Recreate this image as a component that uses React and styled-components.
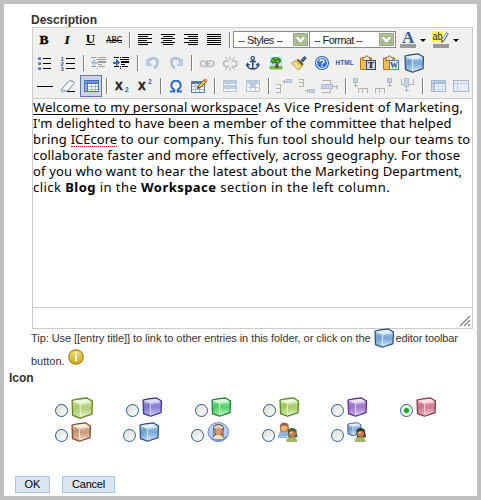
import React from "react";
import styled, { createGlobalStyle } from "styled-components";

const Global = createGlobalStyle`
  * { box-sizing: border-box; }
  html, body { margin: 0; padding: 0; background: #fff; }
`;

const sans = `"Liberation Sans", Arial, sans-serif`;

const Page = styled.main`
  width: 481px;
  height: 500px;
  border: 4px solid #c0c0c0;
  background: #fff;
  overflow: hidden;
  font-family: ${sans};
  font-size: 11px;
  color: #333;
`;

const Label = styled.h2`
  margin: 0;
  padding-left: ${(p) => p.$indent}px;
  font-size: 12px;
  font-weight: bold;
  line-height: 14px;
  height: ${(p) => p.$height}px;
  letter-spacing: ${(p) => p.$spacing || 0}px;
  color: #333;
`;

const DescriptionSection = styled.section`
  padding-top: 9px;
`;

const Editor = styled.div`
  width: 441px;
  height: 302px;
  margin-left: 28px;
  border: 1px solid #ccc;
  display: flex;
  flex-direction: column;
`;

const Toolbar = styled.div`
  height: 71px;
  padding: 1px 0 0 1px;
  background: #f0f0ee;
  border-bottom: 1px solid #ccc;
`;

const ToolRow = styled.div`
  display: flex;
  height: 23px;
`;

const ToolButton = styled.button`
  flex: none;
  width: 22px;
  height: 22px;
  margin: 0 1px 0 0;
  padding: 0;
  border: 1px solid ${(p) => (p.$active ? "#6676a8" : "transparent")};
  background: ${(p) => (p.$active ? "#d0d2dc" : "transparent")};
  svg { display: block; overflow: visible; }
`;

const Separator = styled.div`
  flex: none;
  width: 2px;
  height: 16px;
  margin: 3px 3px 0;
  border-left: 1px solid #808080;
  border-right: 1px solid #fff;
`;

const Select = styled.div`
  width: ${(p) => p.$width}px;
  height: 17px;
  margin: 2px ${(p) => p.$after || 0}px 0 -1px;
  padding: 1px 1px 1px 4px;
  display: flex;
  justify-content: space-between;
  align-items: center;
  flex: none;
  background: #fff;
  border: 1px solid #8c8c8c;
  color: #222;
  font-size: 11px;
  letter-spacing: ${(p) => p.$spacing}px;
  white-space: nowrap;
`;

const ColorButton = styled.div`
  flex: none;
  width: 33px;
  height: 22px;
  svg { display: block; overflow: visible; }
`;

const Content = styled.div`
  flex: 1;
  font-family: "Noto Sans", "Open Sans", sans-serif;
  font-size: 13px;
  line-height: 16px;
  color: #000;
`;

const Line = styled.div`
  height: 16px;
  white-space: nowrap;
  letter-spacing: ${(p) => p.$spacing}px;
`;

const Underlined = styled.span`
  display: inline-block;
  height: 16px;
  border-bottom: 1px solid #000;
  letter-spacing: 0.16px;
`;

const Misspelled = styled.span`
  display: inline-block;
  height: 16px;
  border-bottom: 1px dotted #e00;
  letter-spacing: 0;
`;

const StatusBar = styled.div`
  height: 21px;
  border-top: 1px solid #ccc;
  display: flex;
  justify-content: flex-end;
  align-items: flex-end;
  padding: 0 1px 1px 0;
  svg { display: block; }
`;

const Tip = styled.div`
  padding-left: 27px;
  display: flex;
  align-items: flex-start;
  height: ${(p) => p.$height}px;
  line-height: 13px;
  white-space: nowrap;
  svg { flex: none; display: block; margin: ${(p) => p.$icon}; }
`;

const TipText = styled.span`
  padding-top: ${(p) => p.$top}px;
  letter-spacing: ${(p) => p.$spacing || 0}px;
`;

const IconGrid = styled.div`
  display: grid;
  grid-template-columns: 71px 69px 68px 68px 69px 60px;
  grid-auto-rows: 25px;
  padding: 9px 0 0 51px;
  height: 88px;
`;

const IconOption = styled.label`
  display: flex;
  align-items: flex-start;
  margin-left: ${(p) => p.$shift || 0}px;
  svg { display: block; flex: none; overflow: visible; }
`;

const Radio = styled.span`
  flex: none;
  width: 13px;
  height: 13px;
  margin: 7px 3px 0 0;
  border: 1px solid #245a8e;
  border-radius: 50%;
  background: ${(p) =>
    p.$checked
      ? "radial-gradient(circle, #20a820 0 2px, #8fd68f 2.7px, #f8f8f5 3.3px)"
      : "linear-gradient(135deg, #dcdcd7, #fff)"};
`;

const Actions = styled.div`
  display: flex;
  gap: 12px;
  padding-left: 11px;
`;

const FormButton = styled.button`
  width: ${(p) => p.$width}px;
  height: 17px;
  padding: 0;
  border: 1px solid #a6c4e4;
  background: #dce6f2;
  color: #000;
  font: 11px/15px ${sans};
  letter-spacing: ${(p) => p.$spacing}px;
`;

const Svg = ({ w = 20, h = 20, children, ...rest }) => (
  <svg width={w} height={h} viewBox={`0 0 ${w} ${h}`} fill="none" {...rest}>
    {children}
  </svg>
);
const Px = (props) => <Svg shapeRendering="crispEdges" {...props} />;
const Bars = ({ rows, fill = "#000" }) => rows.map(([x, y, w, h = 1], i) => (
  <rect key={i} x={x} y={y} width={w} height={h} fill={fill} />
));

const serif = { fontFamily: "Liberation Serif, serif", fontWeight: "bold", fill: "#000" };
const small = { fontFamily: "Liberation Sans, sans-serif", fontWeight: "bold" };

const Bold = () => <Svg><text x="4.6" y="14" fontSize="13.5" stroke="#000" strokeWidth=".4" {...serif}>B</text></Svg>;
const Italic = () => <Svg><text x="6.5" y="14" fontSize="13.5" fontStyle="italic" stroke="#000" strokeWidth=".2" {...serif}>I</text></Svg>;
const Underline = () => <Svg><text x="4.8" y="12.5" fontSize="13" {...serif}>U</text><path d="M5 14.5h9" stroke="#000" /></Svg>;
const Strike = () => <Svg><text x="2" y="13" fontSize="10" textLength="16" lengthAdjust="spacingAndGlyphs" stroke="#000" strokeWidth=".2" {...serif} fontWeight="normal">ABC</text><path d="M2 10.5h16" stroke="#000" /></Svg>;

const Align = ({ kind }) => {
  const widths = [14, 10, 14, 9, 14, 10];
  return (
    <Px>
      <Bars rows={widths.map((n, i) => {
        const w = kind === "full" ? 14 : n;
        const x = kind === "right" ? 17 - w : kind === "center" ? 3 + Math.floor((14 - w) / 2) : 3;
        return [x, 4 + i * 2, w];
      })} />
    </Px>
  );
};

const Bullets = () => (
  <Svg>
    {[5.5, 10.5, 15.5].map((y) => <g key={y}><circle cx="4.5" cy={y} r="1.6" fill="#315fb5" /><circle cx="4.2" cy={y - 0.3} r=".6" fill="#bcd0f3" /><path d={`M8 ${y}h8`} stroke="#000" /></g>)}
  </Svg>
);
const Numbers = () => (
  <Svg>
    {[5.5, 10.5, 15.5].map((y, i) => <g key={y}><text x="2.5" y={y + 2} fontSize="6" fill="#2a58b8" {...small}>{i + 1}</text><path d={`M8 ${y}h9`} stroke="#000" /></g>)}
  </Svg>
);
const Dent = ({ out }) => (
  <Px opacity={out ? 0.35 : 1}>
    <Bars rows={[[2, 4, 5], [8, 4, 1], [10, 4, 7], [8, 6, 9], [9, 8, 8, 2], [9, 11, 4], [2, 13, 5], [8, 13, 1], [10, 13, 6], [8, 15, 1]]} />
    <path d={out ? "M2 9.5l4-3.5v2.5h3v2H6v2.5z" : "M8 9.5L4 6v2.5H1v2h3v2.5z"} fill="#3168c4" />
  </Px>
);
const Undo = ({ flip }) => (
  <Svg opacity=".4" transform={flip ? "scale(-1 1)" : undefined}>
    <path d="M5 8.5C9 3 15 5 14.5 9.5C14.3 12 13 14 11 15" stroke="#4f7fc4" strokeWidth="2.6" />
    <path d="M3 5v8h7z" fill="#6b9add" />
  </Svg>
);
const Link = ({ broken }) => (
  <Svg opacity=".4">
    <rect x="3.5" y="8" width="7" height="5.5" rx="2.7" stroke="#627080" strokeWidth="1.5" />
    <rect x="9.5" y="8" width="7.5" height="5.5" rx="2.7" stroke="#627080" strokeWidth="1.5" />
    {broken ? <><path d="M10 7v7" stroke="#f0f0ee" strokeWidth="3" /><path d="M10 3v4M5 4l3 3M15 4l-3 3M10 14v4M5 17l3-3M15 17l-3-3" stroke="#555" /></> : <path d="M7.5 10.7h6" stroke="#627080" strokeWidth="1.5" />}
  </Svg>
);
const Anchor = () => (
  <Svg><circle cx="9.8" cy="5.3" r="1.7" stroke="#29497d" strokeWidth="1.2" /><path d="M9.8 7v9M7 8.5h6M4.3 11.5c0 6 11 6 11 0M3.3 13l1.2-2.4 2 1.7M16.3 13l-1.2-2.4-2 1.7" stroke="#29497d" strokeWidth="1.5" /></Svg>
);
const Picture = () => (
  <Svg><path d="M3 3h14v14H3z" fill="#b9e0fc" stroke="#fff" /><path d="M3.5 13h13v3.5h-13z" fill="#79bf40" /><path d="M10 9l-1 6h4l-1.5-6" fill="#7d491d" /><path d="M4.5 8.5L6 5l3-1 4 .5 2.5 3-2 3-4-.6-3 .8z" fill="#3e8a24" /><path d="M6 7h2v1H6zM9 5h2v1H9zM11 8h2v1h-2z" fill="#85d044" /></Svg>
);
const Brush = () => (
  <Svg><path d="M16.5 4l-4 4.5" stroke="#283d76" strokeWidth="3.2" /><path d="M16.3 3.8l-4 4.4" stroke="#8397d1" strokeWidth="1" /><path d="M9.5 6l5 5-1 2-6-6z" fill="#67572f" /><path d="M7.5 7l5.5 6-3 4-2-1L2.5 10z" fill="#edce63" stroke="#b28b3c" strokeWidth=".8" /><path d="M5.5 9l5 5.5M4 10l5 5.5" stroke="#fff2a8" /></Svg>
);
const Help = () => (
  <Svg><circle cx="10" cy="10" r="6.5" fill="#fff" stroke="#1f5cc0" strokeWidth="1.1" /><circle cx="10" cy="10" r="4.9" fill="#2d6fd2" /><path d="M8 8.7c0-2.5 4-2.5 4-.2 0 1.5-2 1.5-2 3M10 12.4v1.4" stroke="#fff" strokeWidth="1.5" /></Svg>
);
const Html = () => <Svg><text x=".6" y="12" fontSize="8" textLength="18" lengthAdjust="spacingAndGlyphs" fill="#2e62a9" {...small}>HTML</text></Svg>;
const Paste = ({ letter }) => (
  <Svg>
    <path d="M2.5 5h11v11.5h-11z" fill="#f5bd54" stroke="#b4761f" /><path d="M5 4.5h1.5l1-1.5h2l1 1.5h1.5v3H5z" fill="#e9e4cd" stroke="#73592c" strokeWidth=".8" />
    <rect x="8.5" y="7.5" width="9" height="9" fill={letter === "W" ? "#e8f1ff" : "#c8d4e9"} stroke={letter === "W" ? "#4e82d2" : "#344a72"} />
    <text x="13" y="15.2" textAnchor="middle" fontSize={letter === "W" ? 8 : 9} fill={letter === "W" ? "#17499e" : "#000"} fontFamily="Liberation Serif" fontWeight="bold">{letter}</text>
  </Svg>
);

const cubeColors = {
  blue: ["#284d79", "#6c9dd1", "#a9cbed", "#e2f0ff"],
  olive: ["#65862b", "#a9ca6c", "#cce19d", "#eff9d8"],
  lime: ["#557e20", "#9cc65b", "#c9e397", "#eff9d8"],
  indigo: ["#37308b", "#7b74cc", "#a9a4e6", "#deddff"],
  green: ["#157832", "#4cc765", "#82e891", "#d8ffdb"],
  purple: ["#542b7c", "#9b70c9", "#bb9edd", "#ecdfff"],
  red: ["#872b49", "#cc7089", "#e5a0b2", "#ffe2e9"],
  brown: ["#824b2e", "#c29072", "#deb79d", "#fdeee2"],
};
const CubeShape = ({ color }) => {
  const [line, dark, mid, light] = cubeColors[color];
  const id = `cube-${color}`;
  return (
    <>
      <defs>
        <linearGradient id={`${id}-left`} x1="0" y1="0" x2=".3" y2="1"><stop stopColor={mid} /><stop offset=".5" stopColor={dark} /><stop offset="1" stopColor={mid} /></linearGradient>
        <linearGradient id={`${id}-right`} x1="0" y1="0" x2="0" y2="1"><stop stopColor={mid} /><stop offset=".4" stopColor={dark} stopOpacity=".75" /><stop offset="1" stopColor={light} /></linearGradient>
      </defs>
      <path d="M1 3L6.5 1.8 14.5.9 19.5 4 19 15.6 8.5 19.2 1.5 16.6z" fill={mid} />
      <path d="M1 3L6.5 1.8 14.5.9 19.5 4 8 6.3z" fill={light} />
      <path d="M1 3l7 3.3.5 12.9-7-2.6z" fill={`url(#${id}-left)`} />
      <path d="M8 6.3L19.5 4 19 15.6 8.5 19.2z" fill={`url(#${id}-right)`} />
      <path d="M2 3.8l5.6 2.4Q8.5 7 8.4 8.5L8.6 17M8.3 7.6Q8.6 6.6 11 6.2L18 5" stroke={light} strokeOpacity=".85" strokeWidth="1" />
      <path d="M1 3L6.5 1.8 14.5.9 19.5 4 19 15.6 8.5 19.2 1.5 16.6z" stroke={line} strokeWidth="1.2" strokeLinejoin="round" />
    </>
  );
};
const Cube = ({ color = "blue", size = 20 }) => (
  <svg width={size} height={size} viewBox="0 0 20 20" fill="none"><CubeShape color={color} /></svg>
);

const Eraser = () => <Svg><path d="M3 14l7.5-8.5q1-1 2.5-.6l2.5.8q1 .6.3 1.8L9 15.5l-4.5.2Q3 15.5 3 14z" fill="#fff" stroke="#5f7aa7" /><path d="M5 13l5 1.4L15.5 7v2.5L9.5 16H5z" fill="#a7bee2" /><path d="M9 15.5h8" stroke="#000" /></Svg>;
const Grid = ({ faint }) => (
  <Px opacity={faint ? 0.45 : 1}>
    <rect x="3" y="4" width="15" height="12" fill="#fff" />
    <path d="M3 10.5h15m-15 3h15M10.5 4v12m4-12v12" stroke="#9dbbe4" />
    <rect x="3" y="4" width="15" height="3" fill="#6b95d3" />
    <rect x="3" y="4" width="3" height="12" fill="#8fb2e2" />
    <path d="M3.5 4.5h14v11h-14zM3.5 7.5h14M6.5 4v12" stroke="#4a74ae" />
  </Px>
);
const Script = ({ sup }) => <Svg><text x="3" y="14" fontSize="14" fill="#222" stroke="#222" strokeWidth=".3" {...small}>x</text><text x="13" y={sup ? 8 : 16} fontSize="6.5" fill="#2760bd" {...small}>2</text></Svg>;
const Omega = () => <Svg><path d="M4 15.5h4.3v-1.7C3.5 11 5 4.7 10 4.7s6.5 6.3 1.7 9.1v1.7H16" stroke="#3168c9" strokeWidth="2" /></Svg>;
const GridEdit = () => <Svg><path d="M2.5 5.5h13v11h-13z" fill="#eef5ff" stroke="#58779f" /><path d="M3 7h12" stroke="#4879b8" strokeWidth="2" /><path d="M3 10.5h12m-12 3h12M6.5 7v9m4-9v9" stroke="#a5bddd" /><path d="M16.5 4.5l-7 7" stroke="#6b451c" strokeWidth="3.6" /><path d="M16 5l-6.5 6.5" stroke="#f7c653" strokeWidth="2.2" /><path d="M8 13l1-3 2 2z" fill="#222" /><path d="M16 3l2 2" stroke="#e0835e" strokeWidth="2" /></Svg>;
const Props = ({ cell }) => <Px opacity=".45"><path d="M3.5 4.5h13v11h-13z" fill="#fff" stroke="#6b91c0" /><path d="M3 5h14v3H3z" fill="#7ca3dc" />{cell ? <><path d="M3 11.5h14M7.5 8v8M12.5 8v8" stroke="#8fabd1" /><path d="M7 8h5v4H7z" fill="#6d98db" /></> : <><path d="M3 9h14v4H3z" fill="#7ca3dc" /><path d="M8.5 4v12" stroke="#8fabd1" /></>}</Px>;

const RowTool = ({ kind }) => (
  <Px opacity=".4">
    {kind === "before" && <><path d="M1.5 8.5h5m-5 4h5m-5 4h5M6.5 8v9M8 5.5h4m-2-2v4" stroke="#555" /><path d="M12.5 3.5h5v3h-5z" fill="#85afe9" stroke="#476e9e" /></>}
    {kind === "after" && <><path d="M1.5 3.5h5m-5 3h5m-5 4h5M6.5 3v8M8 14.5h4m-2-2v4" stroke="#555" /><path d="M12.5 13.5h5v3h-5z" fill="#85afe9" stroke="#476e9e" /></>}
    {kind === "delete" && <><path d="M2 4.5h8v4m-8 8h8v-4" stroke="#555" /><path d="M1.5 8.5h11v4h-11z" fill="#85afe9" stroke="#476e9e" /><path d="M13 10.5h5m-2-2v4" stroke="#555" /></>}
  </Px>
);
const ColumnTool = ({ kind }) => {
  const x = kind === "before" ? 2.5 : kind === "after" ? 13.5 : 7.5;
  const comb = kind === "before" ? "M7.5 17v-5h9v5m-5-5v5" : kind === "after" ? "M1.5 17v-5h9v5m-5-5v5" : "M4 3v5h3m9-5v5h-4";
  return <Px opacity=".4"><path d={comb} stroke="#555" /><path d={`M${x} 2.5h4v${kind === "delete" ? 8 : 4}h-4z`} fill="#85afe9" stroke="#476e9e" /><path d={kind === "delete" ? "M9.5 11v5m-2-2h4" : `M${x + 2} 7v4m-2-2h4`} stroke="#555" /></Px>;
};
const Merge = () => <Px opacity=".45"><path d="M2.5 4.5h15v11h-15z" fill="#dce9ff" stroke="#526f96" /><path d="M3 7.5h15M6.5 4v12" stroke="#8aa5cb" /></Px>;

const Chevron = () => <Svg w={15} h={13}><rect width="15" height="13" rx="1" fill="#91a477" /><path d="M1.5 1.5h12v10h-12z" fill="#a8b88d" stroke="#b7c59f" /><path d="M3.8 4.2l3.7 4 3.7-4" stroke="#fff" strokeWidth="2.3" /></Svg>;

const TextColor = () => <Svg w={33} h={22}><text x="4" y="14" fontSize="17" fontFamily="Liberation Serif" fontWeight="bold" fill="#315b93">A</text><path d="M2 15h16v4H2z" fill="#999" /><path d="M22 10h6l-3 3z" fill="#000" /></Svg>;
const Highlight = () => <Svg w={33} h={22}><path d="M1 2h11v11H1z" fill="#fff35d" /><text x="1.5" y="11" fontSize="11" textLength="10" lengthAdjust="spacingAndGlyphs" fill="#222" fontFamily="Liberation Sans">ab</text><path d="M16.5 4l-5 8" stroke="#526d9d" strokeWidth="3" /><path d="M16 4.5l-4.5 7" stroke="#d4e3fa" strokeWidth="1.4" /><path d="M10 14l.6-3 2 1.2z" fill="#444" /><path d="M2 15h16v4H2z" fill="#999" /><path d="M22 10h6l-3 3z" fill="#000" /></Svg>;

const Person = () => (
  <Svg w={23} h={20}>
    <ellipse cx="11.3" cy="10" rx="10.3" ry="9.5" fill="#b8cff4" stroke="#6f86c8" strokeWidth="1" />
    <path d="M3 14c3 4 13 5 17-1-1 8-14 9-17 1" fill="#6f8fd8" />
    <path d="M6 15V6q1-4 5.5-4T17 6v9z" fill="#65584d" /><path d="M7 15c1-3 7-3 9 0v2H7z" fill="#f0e4c2" />
    <ellipse cx="11.5" cy="9" rx="3.3" ry="4.4" fill="#dc9977" /><path d="M7 5q4.5-4 9 0v2q-4.5-2-9 0z" fill="#d9d5bd" />
    <path d="M7 8v6M16 8v6" stroke="#d3b77e" />
  </Svg>
);
const Face = ({ x, y, hair, coat, skin = "#ce7749" }) => (
  <g transform={`translate(${x} ${y})`}>
    <path d="M0 14q1-6 4.5-6h2q4 1 5 6z" fill={coat} /><path d="M1.8 5.2q0-5.2 4.4-5.2t4.6 5.2l.8 4H2.6z" fill={hair} />
    <circle cx="6.2" cy="5.5" r="3.5" fill={skin} /><circle cx="5.2" cy="4.8" r="1.2" fill="#f7c29c" /><path d="M2.5 3.6q3.7-3 7.7-.4" stroke={hair} strokeWidth="2" />
  </g>
);
const People = () => <Svg><Face x={0} y={0.5} hair="#9d6548" coat="#8fb4dc" skin="#edaa59" /><path d="M0 14.5h9v1.5H0z" fill="#8fb4dc" /><Face x={8} y={6} hair="#3e6343" coat="#a1b666" /></Svg>;
const CubePerson = () => <Svg><g transform="scale(.72)"><CubeShape color="blue" /></g><Face x={7.5} y={6} hair="#263d2e" coat="#a1b666" /></Svg>;
const Info = () => (
  <Svg w={16} h={16}>
    <defs><linearGradient id="gold" x1="0" y1="0" x2="0" y2="1"><stop stopColor="#f8dc6b" /><stop offset="1" stopColor="#daa21a" /></linearGradient></defs>
    <circle cx="8" cy="8" r="7.2" fill="url(#gold)" stroke="#a9821e" strokeWidth="1.2" />
    <path d="M8 3.3v2M8 6.3v6" stroke="#fff" strokeWidth="2.2" />
  </Svg>
);
const Resize = () => <Svg w={12} h={12}><path d="M1 11L11 1M5 11l6-6M9 11l2-2" stroke="#808080" strokeWidth="1.3" /></Svg>;
const Rule = () => <Svg><path d="M2 10.5h16" stroke="#000" /></Svg>;

const tools = [
  [Bold, Italic, Underline, Strike, "|", [Align, { kind: "left" }], [Align, { kind: "center" }], [Align, { kind: "right" }], [Align, { kind: "full" }], "|"],
  [Bullets, Numbers, "|", [Dent, { out: true }], Dent, "|", Undo, [Undo, { flip: true }], "|", Link, [Link, { broken: true }], Anchor, Picture, Brush, Help, Html, [Paste, { letter: "T" }], [Paste, { letter: "W" }], Cube],
  [Rule, Eraser, [Grid, {}, true], "|", Script, [Script, { sup: true }], "|", Omega, GridEdit, "|", Props, [Props, { cell: true }], "|",
    [RowTool, { kind: "before" }], [RowTool, { kind: "after" }], [RowTool, { kind: "delete" }], "|",
    [ColumnTool, { kind: "before" }], [ColumnTool, { kind: "after" }], [ColumnTool, { kind: "delete" }], "|", [Grid, { faint: true }], Merge],
];

const Tools = ({ items }) => items.map((item, i) => {
  if (item === "|") return <Separator key={i} />;
  const [Icon, props, active] = Array.isArray(item) ? item : [item, {}];
  return <ToolButton key={i} $active={active}><Icon {...props} /></ToolButton>;
});

const choices = [
  ["olive", 0], ["indigo", 0], ["green", 0], ["lime", 0], ["purple", 0], ["red", 0, true],
  ["brown", 0], ["blue", -3], ["person", -4], ["people", -1], ["team", 0],
];
const pictures = { person: Person, people: People, team: CubePerson };

export default function App() {
  return (
    <>
      <Global />
      <Page>
        <DescriptionSection>
          <Label $indent={27} $height={14}>Description</Label>
          <Editor>
            <Toolbar>
              <ToolRow>
                <Tools items={tools[0]} />
                <Select $width={77} $spacing={-0.5}>-- Styles --<Chevron /></Select>
                <Select $width={87} $after={2} $spacing={-0.6}>-- Format --<Chevron /></Select>
                <ColorButton><TextColor /></ColorButton>
                <ColorButton><Highlight /></ColorButton>
              </ToolRow>
              <ToolRow><Tools items={tools[1]} /></ToolRow>
              <ToolRow><Tools items={tools[2]} /></ToolRow>
            </Toolbar>
            <Content>
              <Line $spacing={0.27}><Underlined>Welcome to my personal workspace</Underlined>! As Vice President of Marketing,</Line>
              <Line $spacing={0.11}>I'm delighted to have been a member of the committee that helped</Line>
              <Line $spacing={0.26}>bring <Misspelled>ICEcore</Misspelled> to our company. This fun tool should help our teams to</Line>
              <Line $spacing={0.2}>collaborate faster and more effectively, across geography. For those</Line>
              <Line $spacing={0.15}>of you who want to hear the latest about the Marketing Department,</Line>
              <Line $spacing={0.45}>click <b>Blog</b> in the <b>Workspace</b> section in the left column.</Line>
            </Content>
            <StatusBar><Resize /></StatusBar>
          </Editor>
          <Tip $height={20} $icon="-1px 2px 0 3px">
            <TipText $top={3} $spacing={-0.06}>Tip: Use [[entry title]] to link to other entries in this folder, or click on the</TipText>
            <Cube />
            <TipText $top={3} $spacing={-0.15}>editor toolbar</TipText>
          </Tip>
          <Tip $height={22} $icon="0 0 0 3px">
            <TipText $top={6}>button.</TipText>
            <Info />
          </Tip>
        </DescriptionSection>
        <Label $indent={5} $height={17}>Icon</Label>
        <IconGrid>
          {choices.map(([name, shift, checked]) => {
            const Drawing = pictures[name];
            return (
              <IconOption key={name} $shift={shift}>
                <Radio $checked={checked} />
                {Drawing ? <Drawing /> : <Cube color={name} size={name === "olive" ? 22 : 20} />}
              </IconOption>
            );
          })}
        </IconGrid>
        <Actions>
          <FormButton $width={35} $spacing={0}>OK</FormButton>
          <FormButton $width={53} $spacing={-0.2}>Cancel</FormButton>
        </Actions>
      </Page>
    </>
  );
}
